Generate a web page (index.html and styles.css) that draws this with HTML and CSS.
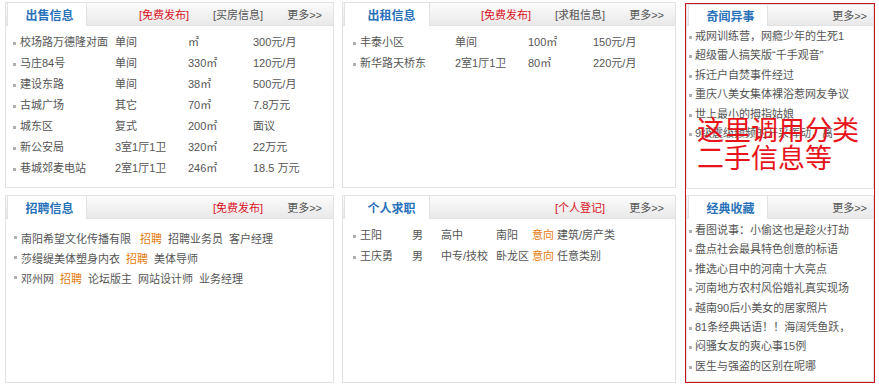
FILE: index.html
```html
<!DOCTYPE html>
<html lang="zh">

<head>
    <meta charset="utf-8">
    <title>分类信息</title>
    <link rel="stylesheet" href="styles.css">
</head>

<body>

    <div class="wrap">

        <div class="main">

            <!-- 出售 -->
            <div class="box">
                <div class="hd">
                    <span class="tab">出售信息</span>
                    <span class="links">
                        <a href="#" class="red">[免费发布]</a>
                        <a href="#">[买房信息]</a>
                        <a href="#">更多&gt;&gt;</a>
                    </span>
                </div>
                <ul class="list house">
                    <li><span>校场路万德隆对面</span><span>单间</span><span>㎡</span><span>300元/月</span></li>
                    <li><span>马庄84号</span><span>单间</span><span>330㎡</span><span>120元/月</span></li>
                    <li><span>建设东路</span><span>单间</span><span>38㎡</span><span>500元/月</span></li>
                    <li><span>古城广场</span><span>其它</span><span>70㎡</span><span>7.8万元</span></li>
                    <li><span>城东区</span><span>复式</span><span>200㎡</span><span>面议</span></li>
                    <li><span>新公安局</span><span>3室1厅1卫</span><span>320㎡</span><span>22万元</span></li>
                    <li><span>巷城郊麦电站</span><span>2室1厅1卫</span><span>246㎡</span><span>18.5 万元</span></li>
                </ul>
            </div>

            <!-- 出租 -->
            <div class="box">
                <div class="hd">
                    <span class="tab wide">出租信息</span>
                    <span class="links">
                        <a href="#" class="red">[免费发布]</a>
                        <a href="#">[求租信息]</a>
                        <a href="#">更多&gt;&gt;</a>
                    </span>
                </div>
                <ul class="list house mid">
                    <li><span>丰泰小区</span><span>单间</span><span>100㎡</span><span>150元/月</span></li>
                    <li><span>新华路天桥东</span><span>2室1厅1卫</span><span>80㎡</span><span>220元/月</span></li>
                </ul>
            </div>

            <!-- 招聘 -->
            <div class="box">
                <div class="hd">
                    <span class="tab">招聘信息</span>
                    <span class="links">
                        <a href="#" class="red">[免费发布]</a>
                        <a href="#">更多&gt;&gt;</a>
                    </span>
                </div>
                <ul class="list jobs">
                    <li><span>南阳希望文化传播有限&nbsp;</span><em>招聘</em><span>招聘业务员</span><span>客户经理</span></li>
                    <li><span>莎缦缇美体塑身内衣</span><em>招聘</em><span>美体导师</span></li>
                    <li><span>邓州网</span><em>招聘</em><span>论坛版主</span><span>网站设计师</span><span>业务经理</span></li>
                </ul>
            </div>

            <!-- 求职 -->
            <div class="box">
                <div class="hd">
                    <span class="tab wide">个人求职</span>
                    <span class="links">
                        <a href="#" class="red">[个人登记]</a>
                        <a href="#">更多&gt;&gt;</a>
                    </span>
                </div>
                <ul class="list people mid">
                    <li><span>王阳</span><span>男</span><span>高中</span><span>南阳</span><span><em>意向</em> 建筑/房产类</span></li>
                    <li><span>王庆勇</span><span>男</span><span>中专/技校</span><span>卧龙区</span><span><em>意向</em> 任意类别</span></li>
                </ul>
            </div>

        </div>

        <div class="side">
            <div class="box side-top">
                <div class="hd">
                    <span class="tab">奇闻异事</span>
                    <span class="links"><a href="#">更多&gt;&gt;</a></span>
                </div>
                <ul class="list news">
                    <li>戒网训练营，网瘾少年的生死1</li>
                    <li>超级雷人搞笑版“千手观音”</li>
                    <li>拆迁户自焚事件经过</li>
                    <li>重庆八美女集体裸浴惹网友争议</li>
                    <li>世上最小的拇指姑娘</li>
                    <li>9级震级频频的开采挥动，离</li>
                </ul>
            </div>
            <div class="box side-bottom">
                <div class="hd">
                    <span class="tab">经典收藏</span>
                    <span class="links"><a href="#">更多&gt;&gt;</a></span>
                </div>
                <ul class="list news">
                    <li>看图说事：小偷这也是趁火打劫</li>
                    <li>盘点社会最具特色创意的标语</li>
                    <li>推选心目中的河南十大亮点</li>
                    <li>河南地方农村风俗婚礼真实现场</li>
                    <li>越南90后小美女的居家照片</li>
                    <li>81条经典话语！！海阔凭鱼跃，</li>
                    <li>闷骚女友的爽心事15例</li>
                    <li>医生与强盗的区别在呢哪</li>
                </ul>
            </div>
            <div class="note">这里调用分类<br>二手信息等</div>
        </div>

    </div>

</body>

</html>
```

FILE: styles.css
```css
body {
    margin: 0;
    padding: 0;
    font-family: "Liberation Sans", "Noto Sans CJK SC", sans-serif;
    font-size: 11px;
    color: #555;
    background-color: #fff;
}

a {
    color: #555;
    text-decoration: none;
}

em {
    font-style: normal;
    color: #e57a0c;
}

.wrap {
    display: flex;
    align-items: flex-start;
    padding: 2px 0 0 5px;
}

.main {
    display: grid;
    grid-template-columns: 329px 334px;
    grid-template-rows: 186px 188px;
    gap: 7px 8px;
}

.box {
    box-sizing: border-box;
    border: 1px solid #e2e2e2;
    background-color: #fff;
}

.hd {
    display: flex;
    align-items: center;
    height: 22px;
    padding-right: 11px;
    border-bottom: 1px solid #e2e2e2;
    background: linear-gradient(#fbfbfb, #e9e9e9);
}

.tab {
    align-self: stretch;
    box-sizing: border-box;
    width: 80px;
    margin-left: 1px;
    margin-bottom: -1px;
    padding-left: 5px;
    display: flex;
    align-items: center;
    justify-content: center;
    background-color: #fff;
    border-left: 1px solid #e2e2e2;
    border-right: 1px solid #e2e2e2;
    font-size: 12px;
    font-weight: bold;
    color: #2771b9;
}

.tab.wide {
    width: 86px;
    padding-left: 9px;
}

.links {
    margin-left: auto;
    display: flex;
    gap: 24px;
}

.links .red {
    color: #d8101c;
}

.list {
    list-style: none;
    margin: 0;
    padding: 6px 0 0 7px;
}

.list li {
    height: 21px;
    line-height: 21px;
    padding-left: 7px;
    white-space: nowrap;
    background: linear-gradient(#b0b0b0, #b0b0b0) no-repeat 0 10px / 3px 3px;
}

.list.mid {
    padding-left: 10px;
}

.house li {
    display: grid;
    grid-template-columns: 95px 73px 65px auto;
}

.people li {
    display: grid;
    grid-template-columns: 52px 29px 55px 36px auto;
}

.jobs {
    padding-top: 10px;
    padding-left: 8px;
}

.jobs li {
    display: flex;
    gap: 6px;
    height: 20px;
    line-height: 20px;
    background-position: 0 7px;
}

/* right column */
.side {
    position: relative;
    box-sizing: border-box;
    width: 190px;
    height: 380px;
    margin: 1px 0 0 9px;
    border: 1px solid #c4141d;
    display: flex;
    flex-direction: column;
    gap: 6px;
}

.side .hd {
    padding-right: 6px;
}

.side-top {
    height: 185px;
}

.side-top .hd {
    height: 20px;
}

.side-bottom {
    flex: 1;
}

.list.news {
    padding: 1px 0 0 2px;
}

.news li {
    height: 19.4px;
    line-height: 19.4px;
    padding-left: 6px;
    background-position: 0 9px;
}

.side-bottom .list.news {
    padding-top: 2px;
}

.note {
    position: absolute;
    left: 11px;
    top: 113px;
    font-size: 27px;
    line-height: 28px;
    color: #e8141c;
    white-space: nowrap;
}
```
